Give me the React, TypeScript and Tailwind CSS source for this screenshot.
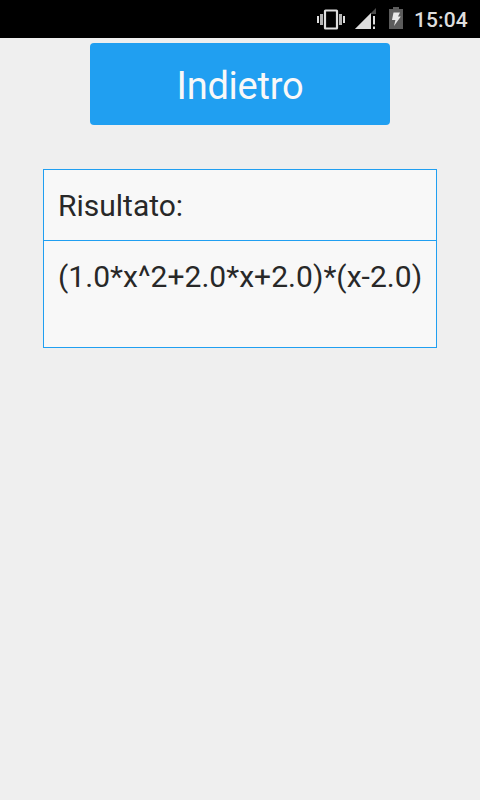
function VibrateIcon() {
  return (
    <svg width="28" height="22" viewBox="0 0 28 22" shapeRendering="crispEdges">
      <g fill="#dedede">
        <rect x="0" y="7" width="2" height="7" />
        <rect x="3" y="5" width="3" height="11" fill="#b4b4b4" />
        <rect x="22" y="5" width="3" height="11" fill="#b4b4b4" />
        <rect x="26" y="7" width="2" height="7" />
      </g>
      <rect x="8" y="1.5" width="12" height="18" rx="0.5" fill="none" stroke="#dedede" strokeWidth="2.2" shapeRendering="auto" />
    </svg>
  )
}

function SignalIcon() {
  return (
    <svg width="21" height="22" viewBox="0 0 21 22">
      <path d="M21 0v21H0z" fill="#4d4d4d" />
      <path d="M16 5v16H0z" fill="#dedede" />
      <rect x="16" y="6" width="5" height="16" fill="#000" />
      <rect x="18" y="8" width="2" height="8.5" fill="#dedede" />
      <rect x="18" y="18.5" width="2" height="2.5" fill="#dedede" />
    </svg>
  )
}

function BatteryIcon() {
  return (
    <svg width="14" height="22" viewBox="0 0 14 22">
      <path d="M4 0h6v2h4v20H0V2h4z" fill="#5c5c5c" />
      <path d="M4.5 5.5h6.5L9 9.5h2.8L5 19l1.4-6H3z" fill="#e6e6e6" />
    </svg>
  )
}

function StatusBar() {
  return (
    <header className="flex h-[38px] items-start bg-black pl-[317px]">
      <div className="pt-[9px]">
        <VibrateIcon />
      </div>
      <div className="pt-2 pl-2.5">
        <SignalIcon />
      </div>
      <div className="pt-[7px] pl-[13px]">
        <BatteryIcon />
      </div>
      <span className="pt-2 pl-[11px] text-[21px] leading-6 font-medium tracking-[0.1px] text-[#dedede]">15:04</span>
    </header>
  )
}

export default function App() {
  return (
    <div className="flex h-[800px] w-[480px] flex-col bg-[#efefef] font-['Roboto',sans-serif]">
      <StatusBar />
      <main className="flex flex-col items-center pt-[5px]">
        <button className="h-[82px] w-[300px] rounded bg-[#209ff1] pt-1 text-[38px] leading-none tracking-[-0.25px] text-[#f8f8f8]">
          Indietro
        </button>
        <section className="mt-11 h-[179px] w-[394px] border border-[#209ff1] bg-[#f8f8f8] text-[30px] leading-9 text-[#282828]">
          <div className="h-[71px] border-b border-[#209ff1] pt-[18px] pl-3.5">Risultato:</div>
          <div className="pt-[18px] pl-3.5 tracking-[0.04px] whitespace-nowrap">(1.0*x^2+2.0*x+2.0)*(x-2.0)</div>
        </section>
      </main>
    </div>
  )
}
